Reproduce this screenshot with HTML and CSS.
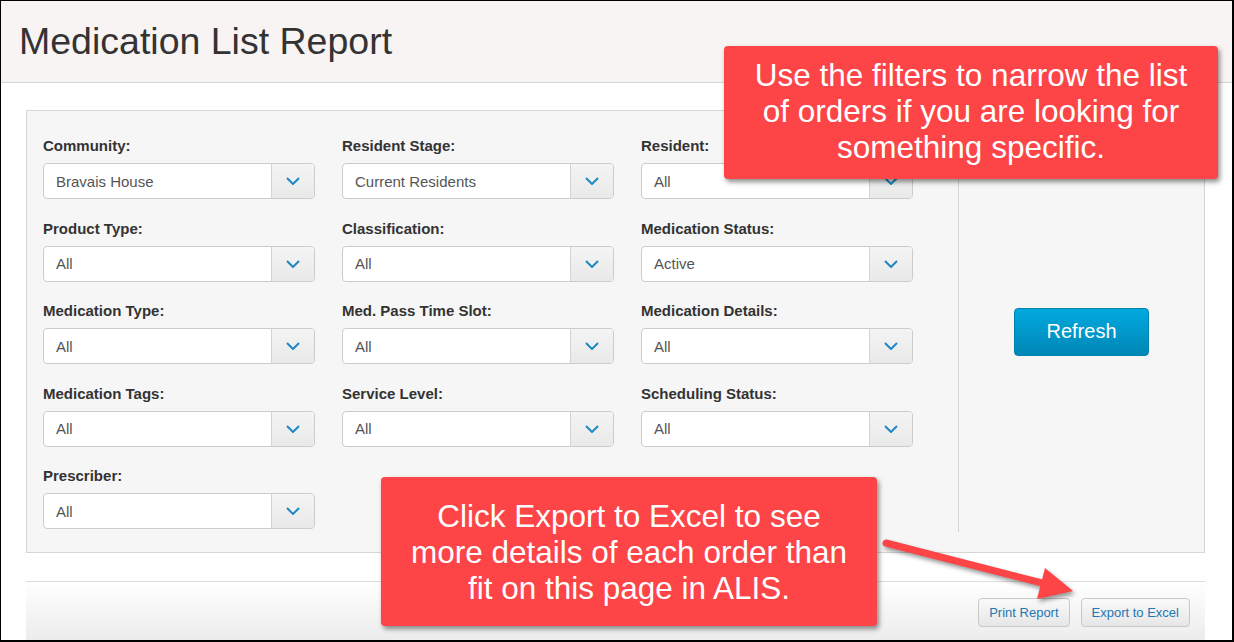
FILE: index.html
```html
<!DOCTYPE html>
<html lang="en">
<head>
    <meta charset="UTF-8">
    <title>Medication List Report</title>
    <link rel="stylesheet" href="styles.css">
</head>
<body>
<div class="frame">
    <div class="page-header">
        <h1>Medication List Report</h1>
    </div>

    <div class="content">
        <div class="panel">
            <div class="filters">
                <div class="field">
                    <label>Community:</label>
                    <div class="select"><span>Bravais House</span><i class="addon"><svg viewBox="0 0 14 8"><path d="M1 1l6 6 6-6"/></svg></i></div>
                </div>
                <div class="field">
                    <label>Resident Stage:</label>
                    <div class="select"><span>Current Residents</span><i class="addon"><svg viewBox="0 0 14 8"><path d="M1 1l6 6 6-6"/></svg></i></div>
                </div>
                <div class="field">
                    <label>Resident:</label>
                    <div class="select"><span>All</span><i class="addon"><svg viewBox="0 0 14 8"><path d="M1 1l6 6 6-6"/></svg></i></div>
                </div>
                <div class="field">
                    <label>Product Type:</label>
                    <div class="select"><span>All</span><i class="addon"><svg viewBox="0 0 14 8"><path d="M1 1l6 6 6-6"/></svg></i></div>
                </div>
                <div class="field">
                    <label>Classification:</label>
                    <div class="select"><span>All</span><i class="addon"><svg viewBox="0 0 14 8"><path d="M1 1l6 6 6-6"/></svg></i></div>
                </div>
                <div class="field">
                    <label>Medication Status:</label>
                    <div class="select"><span>Active</span><i class="addon"><svg viewBox="0 0 14 8"><path d="M1 1l6 6 6-6"/></svg></i></div>
                </div>
                <div class="field">
                    <label>Medication Type:</label>
                    <div class="select"><span>All</span><i class="addon"><svg viewBox="0 0 14 8"><path d="M1 1l6 6 6-6"/></svg></i></div>
                </div>
                <div class="field">
                    <label>Med. Pass Time Slot:</label>
                    <div class="select"><span>All</span><i class="addon"><svg viewBox="0 0 14 8"><path d="M1 1l6 6 6-6"/></svg></i></div>
                </div>
                <div class="field">
                    <label>Medication Details:</label>
                    <div class="select"><span>All</span><i class="addon"><svg viewBox="0 0 14 8"><path d="M1 1l6 6 6-6"/></svg></i></div>
                </div>
                <div class="field">
                    <label>Medication Tags:</label>
                    <div class="select"><span>All</span><i class="addon"><svg viewBox="0 0 14 8"><path d="M1 1l6 6 6-6"/></svg></i></div>
                </div>
                <div class="field">
                    <label>Service Level:</label>
                    <div class="select"><span>All</span><i class="addon"><svg viewBox="0 0 14 8"><path d="M1 1l6 6 6-6"/></svg></i></div>
                </div>
                <div class="field">
                    <label>Scheduling Status:</label>
                    <div class="select"><span>All</span><i class="addon"><svg viewBox="0 0 14 8"><path d="M1 1l6 6 6-6"/></svg></i></div>
                </div>
                <div class="field">
                    <label>Prescriber:</label>
                    <div class="select"><span>All</span><i class="addon"><svg viewBox="0 0 14 8"><path d="M1 1l6 6 6-6"/></svg></i></div>
                </div>
            </div>
            <div class="side">
                <button class="refresh">Refresh</button>
            </div>
        </div>

        <div class="footer">
            <button class="btn">Print Report</button>
            <button class="btn">Export to Excel</button>
        </div>
    </div>

    <!-- annotation overlays -->
    <div class="callout callout-filters">Use the filters to narrow the list<br>of orders if you are looking for<br>something specific.</div>
    <div class="callout callout-export">Click Export to Excel to see<br>more details of each order than<br>fit on this page in ALIS.</div>
    <svg class="arrow" width="1234" height="642" viewBox="0 0 1234 642">
        <line x1="886" y1="543" x2="1046" y2="584"/>
        <polygon points="1045,568 1073,591 1037,599"/>
    </svg>
</div>
</body>
</html>
```

FILE: styles.css
```css
* {
    box-sizing: border-box;
}
body {
    margin: 0;
    font-family: "Liberation Sans", Arial, sans-serif;
    color: #333;
}
.frame {
    position: relative;
    width: 1234px;
    height: 642px;
    border: solid #000;
    border-width: 1px 2px 2px 1px;
    display: flex;
    flex-direction: column;
    overflow: hidden;
    background: #fff;
}
.page-header {
    height: 82px;
    flex: none;
    background: #f8f4f3;
    border-bottom: 1px solid #d4d4d4;
    display: flex;
    align-items: center;
    padding-left: 18px;
}
.page-header h1 {
    margin: 0;
    font-size: 37.5px;
    font-weight: normal;
    color: #333;
}
.content {
    flex: 1;
    display: flex;
    flex-direction: column;
    padding: 27px 0 0 25px;
}
.panel {
    width: 1179px;
    height: 443px;
    flex: none;
    background: #f6f6f6;
    border: 1px solid #d6d6d6;
    display: flex;
}
.filters {
    width: 931px;
    padding: 25px 0 0 16px;
    display: grid;
    grid-template-columns: repeat(3, 272px);
    column-gap: 27px;
    row-gap: 19.5px;
    align-content: start;
}
.field label {
    display: block;
    font-size: 15px;
    font-weight: bold;
    line-height: 20px;
    margin-bottom: 7px;
    color: #333;
}
.select {
    height: 36px;
    background: #fff;
    border: 1px solid #ccc;
    border-radius: 4px;
    display: flex;
    align-items: center;
    font-size: 15px;
    color: #555;
}
.select span {
    flex: 1;
    padding-left: 12px;
}
.select .addon {
    width: 43px;
    height: 100%;
    border-left: 1px solid #d4d4d4;
    border-radius: 0 3px 3px 0;
    background: linear-gradient(#f4f4f4, #e9e9e9);
    display: flex;
    align-items: center;
    justify-content: center;
}
.select .addon svg {
    width: 14px;
    height: 8px;
    fill: none;
    stroke: #1e88c2;
    stroke-width: 2;
}
.side {
    flex: 1;
    margin: 20px 0;
    border-left: 1px solid #d6d6d6;
    display: flex;
    align-items: center;
    justify-content: center;
}
.refresh {
    width: 135px;
    height: 48px;
    font-family: inherit;
    font-size: 20px;
    color: #fff;
    background: linear-gradient(#00a9de, #0087b6);
    border: 1px solid #0082ad;
    border-radius: 4px;
}
.footer {
    width: 1179px;
    flex: 1;
    margin-top: 28px;
    border-top: 1px solid #ddd;
    background: linear-gradient(#fff, #ececec);
    display: flex;
    justify-content: flex-end;
    align-items: flex-start;
    gap: 11px;
    padding: 16px 15px 0 0;
}
.btn {
    height: 29px;
    padding: 0 10px;
    font-family: inherit;
    font-size: 13px;
    color: #1f77b4;
    background: linear-gradient(#fafafa, #e6e6e6);
    border: 1px solid #c8c8c8;
    border-radius: 4px;
}
.callout {
    position: absolute;
    background: #fd4446;
    color: #fff;
    border-radius: 4px;
    box-shadow: 2px 3px 5px rgba(0, 0, 0, 0.45);
    font-size: 31.5px;
    line-height: 36px;
    text-align: center;
    display: flex;
    align-items: center;
    justify-content: center;
    white-space: nowrap;
}
.callout-filters {
    left: 723px;
    top: 45px;
    width: 494px;
    height: 133px;
    padding-bottom: 3px;
}
.callout-export {
    left: 380px;
    top: 476px;
    width: 496px;
    height: 149px;
}
.arrow {
    position: absolute;
    left: -1px;
    top: -1px;
    pointer-events: none;
    filter: drop-shadow(2px 3px 2px rgba(0, 0, 0, 0.4));
}
.arrow line {
    stroke: #fd4446;
    stroke-width: 7;
    stroke-linecap: round;
}
.arrow polygon {
    fill: #fd4446;
}
```
